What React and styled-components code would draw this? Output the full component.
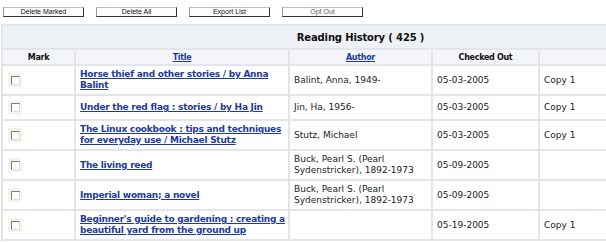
import styled, { createGlobalStyle } from "styled-components";

const GlobalStyle = createGlobalStyle`
  body {
    margin: 0;
    background: #ffffff;
    overflow: hidden;
    font-family: "DejaVu Sans", Verdana, sans-serif;
  }
`;

const Toolbar = styled.div`
  display: flex;
  gap: 12px;
  padding: 7px 0 0 3px;
`;

const Button = styled.button`
  width: 81px;
  height: 10px;
  padding: 0;
  box-sizing: border-box;
  font: 7px "Liberation Sans", Arial, sans-serif;
  line-height: 8px;
  color: ${(p) => (p.$muted ? "#666666" : "#111111")};
  background: #fdfdfe;
  border: 1px solid;
  border-color: #b8c2d6 #333333 #333333 #8794b8;
  cursor: pointer;
`;

const Table = styled.table`
  margin: 7px 0 0 1px;
  width: 719px;
  table-layout: fixed;
  border-collapse: separate;
  border-spacing: 2px;
  background: #e2e6eb;
`;

const Caption = styled.th`
  height: 22px;
  padding: 0;
  background: #eef1f5;
  font-size: 10px;
  letter-spacing: -0.15px;
  font-weight: bold;
  color: #111111;
  text-align: center;
`;

const ColHead = styled.th`
  height: 14px;
  padding: 0;
  background: #f3f5f8;
  font-size: 8px;
  letter-spacing: -0.3px;
  font-weight: bold;
  color: #111111;
  text-align: center;
`;

const HeadLink = styled.a`
  color: #1d3a9e;
  text-decoration: underline;
`;

const Cell = styled.td`
  padding: 3px 4px;
  background: #ffffff;
  font-size: 9px;
  line-height: 11px;
  color: #222222;
  vertical-align: middle;
`;

const MarkCell = styled(Cell)`
  height: 17px;
`;

const TitleCell = styled(Cell)`
  padding-right: 0;
`;

const TitleLink = styled.a`
  color: #1d3a9e;
  font-weight: bold;
  letter-spacing: -0.25px;
  text-decoration: underline;
`;

const CheckFrame = styled.span`
  display: inline-flex;
  align-items: center;
  justify-content: center;
  width: 14px;
  height: 14px;
  margin-left: 1px;
  background: #f8f3e8;
  vertical-align: middle;
`;

const CheckBox = styled.span`
  display: block;
  width: 9px;
  height: 9px;
  box-sizing: border-box;
  background: #ffffff;
  border: 1px solid;
  border-color: #7d7d7d #dcdcdc #dcdcdc #7d7d7d;
`;

const rows = [
  {
    title: "Horse thief and other stories / by Anna Balint",
    author: "Balint, Anna, 1949-",
    date: "05-03-2005",
    copy: "Copy 1",
  },
  {
    title: "Under the red flag : stories / by Ha Jin",
    author: "Jin, Ha, 1956-",
    date: "05-03-2005",
    copy: "Copy 1",
  },
  {
    title: "The Linux cookbook : tips and techniques for everyday use / Michael Stutz",
    author: "Stutz, Michael",
    date: "05-03-2005",
    copy: "Copy 1",
  },
  {
    title: "The living reed",
    author: "Buck, Pearl S. (Pearl Sydenstricker), 1892-1973",
    date: "05-09-2005",
    copy: "",
  },
  {
    title: "Imperial woman; a novel",
    author: "Buck, Pearl S. (Pearl Sydenstricker), 1892-1973",
    date: "05-09-2005",
    copy: "",
  },
  {
    title: "Beginner's guide to gardening : creating a beautiful yard from the ground up",
    author: "",
    date: "05-19-2005",
    copy: "Copy 1",
  },
];

export default function App() {
  return (
    <>
      <GlobalStyle />
      <Toolbar>
        <Button>Delete Marked</Button>
        <Button>Delete All</Button>
        <Button>Export List</Button>
        <Button $muted>Opt Out</Button>
      </Toolbar>
      <Table>
        <colgroup>
          <col style={{ width: 71 }} />
          <col style={{ width: 212 }} />
          <col style={{ width: 141 }} />
          <col style={{ width: 105 }} />
          <col style={{ width: 178 }} />
        </colgroup>
        <thead>
          <tr>
            <Caption colSpan={5}>Reading History ( 425 )</Caption>
          </tr>
          <tr>
            <ColHead>Mark</ColHead>
            <ColHead>
              <HeadLink href="#">Title</HeadLink>
            </ColHead>
            <ColHead>
              <HeadLink href="#">Author</HeadLink>
            </ColHead>
            <ColHead>Checked Out</ColHead>
            <ColHead />
          </tr>
        </thead>
        <tbody>
          {rows.map((r, i) => (
            <tr key={i}>
              <MarkCell>
                <CheckFrame>
                  <CheckBox />
                </CheckFrame>
              </MarkCell>
              <TitleCell>
                <TitleLink href="#">{r.title}</TitleLink>
              </TitleCell>
              <Cell>{r.author}</Cell>
              <Cell>{r.date}</Cell>
              <Cell>{r.copy}</Cell>
            </tr>
          ))}
        </tbody>
      </Table>
    </>
  );
}
